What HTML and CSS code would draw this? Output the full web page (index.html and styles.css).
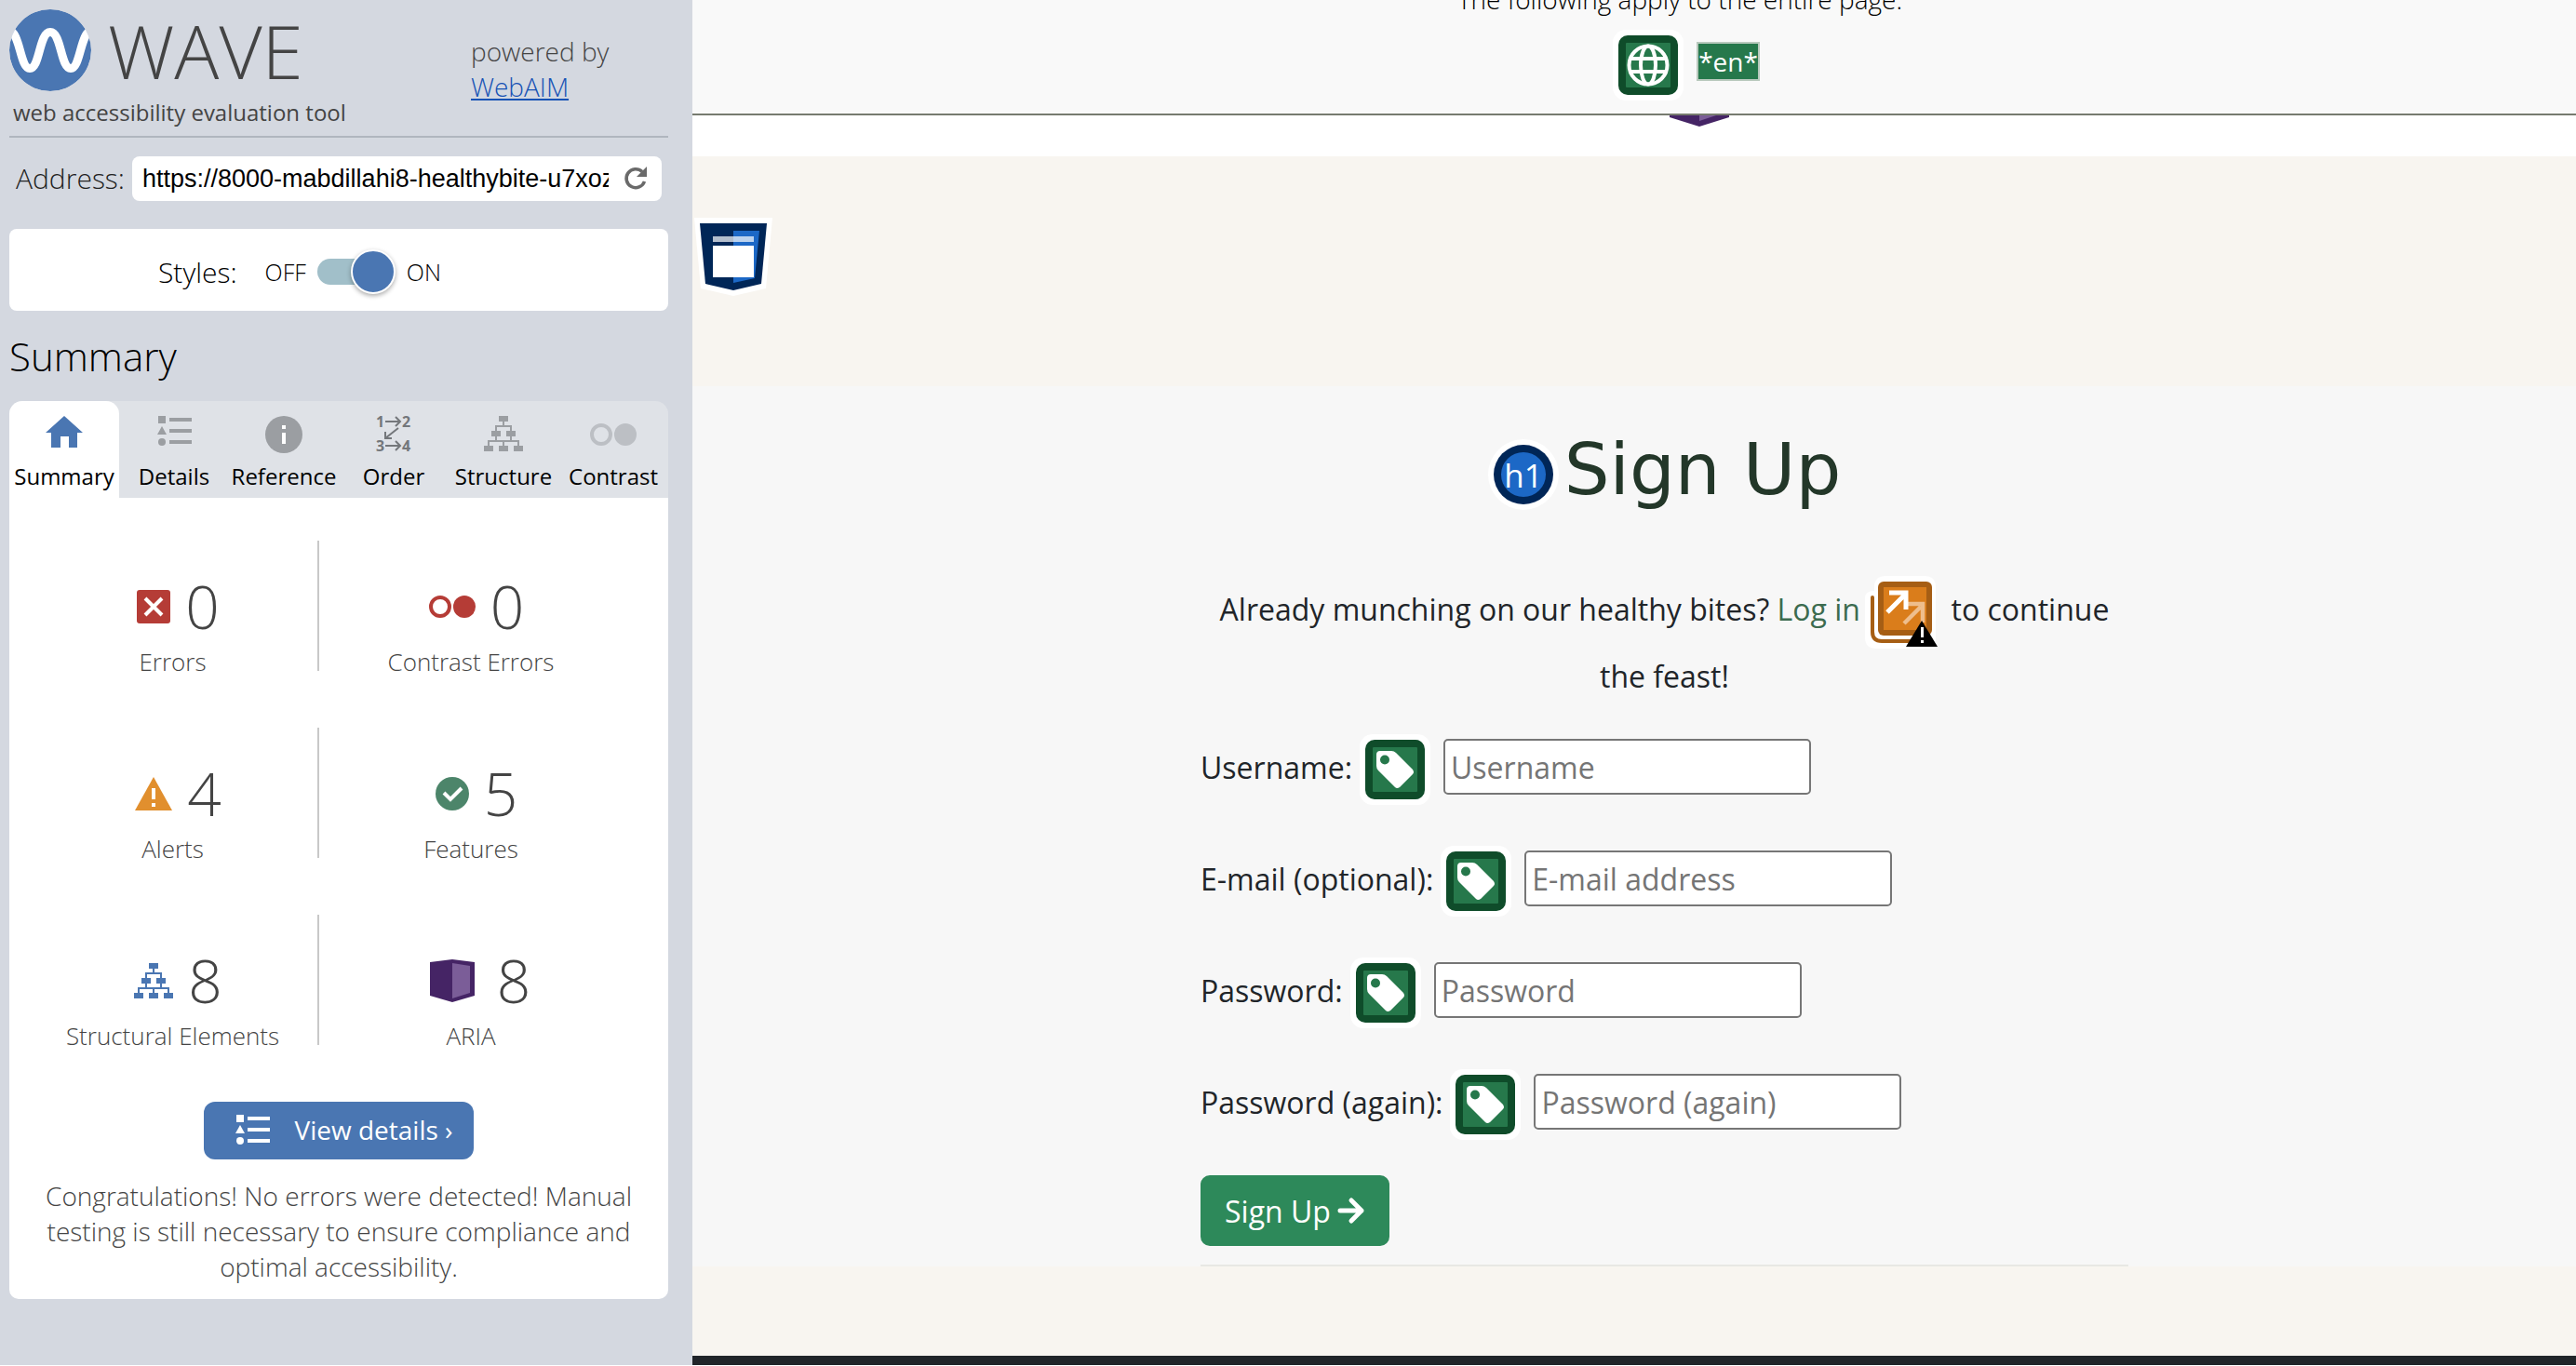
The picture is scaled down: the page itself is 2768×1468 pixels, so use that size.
FILE: index.html
```html
<!DOCTYPE html>
<html lang="en">
<head>
<meta charset="utf-8">
<title>WAVE report: Sign Up</title>
<link rel="stylesheet" href="styles.css">
</head>
<body>
<svg class="sprite" aria-hidden="true">
  <symbol id="list" viewBox="0 0 37 32">
    <path d="M1 0h8v8H1zM5 11l5 9H0zM13 2h24v4H13zM13 14h24v4H13zM13 26h24v4H13z"/><circle cx="5" cy="28" r="4"/>
  </symbol>
  <symbol id="tree" viewBox="0 0 42 38">
    <path d="M16 0h10v6H16zM8 16h10v6H8zM24 16h10v6H24zM0 32h10v6H0zM16 32h10v6H16zM32 32h10v6H32z"/>
    <path d="M21 6v5M13 16v-5h16v5M13 22v5M29 22v5M5 32v-5h32v5M21 27v5" fill="none" stroke="currentColor" stroke-width="2"/>
  </symbol>
  <symbol id="dots" viewBox="0 0 50 24">
    <circle cx="12" cy="12" r="10" fill="none" stroke="currentColor" stroke-width="4"/><circle cx="38" cy="12" r="12"/>
  </symbol>
  <symbol id="tag" viewBox="0 0 76 76">
    <rect width="76" height="76" rx="14" fill="#fff"/><rect x="6" y="6" width="64" height="64" rx="10" fill="#0f4c2a"/><rect x="14" y="14" width="48" height="48" rx="1" fill="#26784b"/>
    <path fill="#fff" fill-rule="evenodd" d="M22 18h12q3 0 5 2l18 18q2 3 0 5L43 57q-3 2-5 0L20 39q-2-2-2-5V22q0-4 4-4zM27 22.500a5 5 0 1 0 0 10a5 5 0 1 0 0-10z"/>
  </symbol>
</svg>

<aside class="sidebar">
  <header class="brand">
    <div>
      <div class="brand-name">
        <svg width="88" height="88" viewBox="0 0 88 88" aria-hidden="true">
          <defs><clipPath id="disc"><circle cx="44" cy="44" r="44"/></clipPath></defs>
          <g clip-path="url(#disc)"><circle cx="44" cy="44" r="44" fill="#4a76b2"/>
          <path d="M-2 22C12 22 11 63.500 22 63.500S32 24.500 44 24.500S55 63.500 66 63.500S76 22 90 22" fill="none" stroke="#fff" stroke-width="9"/></g>
        </svg>
        <span>WAVE</span>
      </div>
      <p class="tagline">web accessibility evaluation tool</p>
    </div>
    <p class="powered">powered by<br><a href="#webaim">WebAIM</a></p>
  </header>

  <form class="address">
    <label for="url">Address:</label>
    <div class="address-box">
      <input id="url" type="text" value="https://8000-mabdillahi8-healthybite-u7xozu2p.ws.gitpod.io/accounts/signup/">
      <button type="button" aria-label="Reload">
        <svg width="26" height="26" viewBox="0 0 26 26"><path d="M20 5.500A10 10 0 1 0 22.500 16" fill="none" stroke="#6a6a6a" stroke-width="3.500"/><path d="M25 0v11H14z" fill="#6a6a6a"/></svg>
      </button>
    </div>
  </form>

  <div class="styles-panel">
    <label for="styles">Styles:</label>
    <span class="state">OFF</span>
    <input id="styles" class="switch" type="checkbox" role="switch" checked>
    <span class="state">ON</span>
  </div>

  <h2>Summary</h2>
  <nav class="tabs">
    <button type="button" class="active"><span class="tab-icon"><svg width="40" height="34" viewBox="0 0 40 34"><path d="M20 0l20 18h-6v16h-9V22h-9v12H6V18H0z"/></svg></span>Summary</button>
    <button type="button"><span class="tab-icon"><svg width="37" height="32"><use href="#list"/></svg></span>Details</button>
    <button type="button"><span class="tab-icon"><svg width="40" height="40" viewBox="0 0 40 40"><circle cx="20" cy="20" r="20"/><path d="M18 10h4v4h-4zM18 18h4v12h-4z" fill="#fff"/></svg></span>Reference</button>
    <button type="button"><span class="tab-icon order"><svg width="38" height="40" viewBox="0 0 38 40"><g font-size="16" font-weight="700"><text x="0" y="12">1</text><text x="28" y="12">2</text><text x="0" y="38">3</text><text x="28" y="38">4</text></g><path d="M10 6h16M21 1l5 5-5 5M10 32h16M21 27l5 5-5 5M24 13L10 24M10 17v7h7" fill="none" stroke="currentColor" stroke-width="2"/></svg></span>Order</button>
    <button type="button"><span class="tab-icon"><svg width="42" height="38"><use href="#tree"/></svg></span>Structure</button>
    <button type="button"><span class="tab-icon faint"><svg width="50" height="24"><use href="#dots"/></svg></span>Contrast</button>
  </nav>

  <section class="report">
    <dl class="counts">
      <div class="count"><dd><svg width="36" height="36" viewBox="0 0 36 36"><rect width="36" height="36" rx="3" fill="#b53c36"/><path d="M9 9l18 18M27 9L9 27" stroke="#fff" stroke-width="4"/></svg>0</dd><dt>Errors</dt></div>
      <div class="count"><dd><svg class="red" width="50" height="24"><use href="#dots"/></svg>0</dd><dt>Contrast Errors</dt></div>
      <div class="count"><dd><svg width="40" height="36" viewBox="0 0 40 36"><path d="M20 0l20 36H0z" fill="#e18f2e"/><path d="M18 12h4v12h-4zM18 28h4v4h-4z" fill="#fff"/></svg>4</dd><dt>Alerts</dt></div>
      <div class="count"><dd><svg width="36" height="36" viewBox="0 0 36 36"><circle cx="18" cy="18" r="18" fill="#4c856a"/><path d="M9 17l7 7 12-12" fill="none" stroke="#fff" stroke-width="4"/></svg>5</dd><dt>Features</dt></div>
      <div class="count"><dd><svg class="blue" width="42" height="38"><use href="#tree"/></svg>8</dd><dt>Structural Elements</dt></div>
      <div class="count"><dd><svg width="64" height="46" viewBox="0 0 64 46"><path d="M32 0l24 3v36l-24 7-24-7V3z" fill="#452465"/><path d="M32 4l19 3v29l-19 6z" fill="#7b5d98"/></svg>8</dd><dt>ARIA</dt></div>
    </dl>
    <button type="button" class="details"><svg width="37" height="32"><use href="#list"/></svg>View details ›</button>
    <p class="verdict">Congratulations! No errors were detected! Manual testing is still necessary to ensure compliance and optimal accessibility.</p>
  </section>
</aside>

<div class="page">
  <div class="page-notes">
    <p>The following apply to the entire page.</p>
    <div class="notes-row">
      <svg width="76" height="76" viewBox="0 0 76 76"><rect width="76" height="76" rx="14" fill="#fff"/><rect x="6" y="6" width="64" height="64" rx="10" fill="#0f4c2a"/><rect x="14" y="14" width="48" height="48" rx="1" fill="#26784b"/><g fill="none" stroke="#fff" stroke-width="4"><circle cx="38" cy="38" r="20.500"/><ellipse cx="38" cy="38" rx="8" ry="20.500"/><path d="M19 31h38M19 45h38"/></g></svg>
      <span class="lang">*en*</span>
    </div>
  </div>
  <div class="navbar">
    <svg width="76" height="18" viewBox="0 0 76 18"><path d="M6 0h64v2L38 12 6 2z" fill="#452465"/><path d="M38 0h18L38 6z" fill="#7b5d98"/></svg>
  </div>

  <main>
    <svg class="landmark" width="84" height="84" viewBox="0 0 84 84"><path d="M0 0h84l-7 76-35 8-35-8z" fill="#fff"/><path d="M6 6h72l-6 65-30 7-30-7z" fill="#002657"/><path d="M42 14h28l-5 51-23 5z" fill="#1c68c6"/><path d="M20 20h44v6H20z" fill="#fff" opacity=".7"/><path d="M20 30h44v34H20z" fill="#fff"/></svg>
    <section class="signup">
      <div class="column">
        <h1><svg width="76" height="76" viewBox="0 0 76 76"><circle cx="38" cy="38" r="38" fill="#fff"/><circle cx="38" cy="38" r="32" fill="#002657"/><circle cx="38" cy="38" r="24" fill="#1c68c6"/><text x="38" y="52" font-size="35" text-anchor="middle" fill="#fff">h1</text></svg>Sign Up</h1>
        <p class="intro">Already munching on our healthy bites? <a href="#login">Log in</a> <svg width="78" height="78" viewBox="0 0 78 78"><path d="M10 16V12Q10 0 22 0h42q12 0 12 12v66H12Q0 78 0 66V24q0-8 10-8z" fill="#fff"/><path d="M8 23v37q0 10 10 10h40" fill="none" stroke="#a65e14" stroke-width="4" stroke-linecap="round"/><rect x="14" y="6" width="58" height="58" rx="6" fill="#a65e14"/><rect x="20" y="12" width="46" height="46" fill="#da7d1b"/><path d="M42 51l18-18M44 30h18v20" fill="none" stroke="#eebe8d" stroke-width="4.500"/><path d="M24 39l19-19M26 18h18v18" fill="none" stroke="#fff" stroke-width="5"/><path d="M61 48l17 28H44z" fill="#000"/><path d="M60 55h3v11h-3zM60 69h3v3h-3z" fill="#fff"/></svg> to continue the feast!</p>
        <form>
          <div class="field"><label for="username">Username:</label><svg class="badge" width="76" height="76"><use href="#tag"/></svg><input id="username" type="text" placeholder="Username"></div>
          <div class="field"><label for="email">E-mail (optional):</label><svg class="badge" width="76" height="76"><use href="#tag"/></svg><input id="email" type="email" placeholder="E-mail address"></div>
          <div class="field"><label for="pass1">Password:</label><svg class="badge" width="76" height="76"><use href="#tag"/></svg><input id="pass1" type="password" placeholder="Password"></div>
          <div class="field"><label for="pass2">Password (again):</label><svg class="badge" width="76" height="76"><use href="#tag"/></svg><input id="pass2" type="password" placeholder="Password (again)"></div>
          <button type="submit" class="submit">Sign Up<svg width="30" height="28" viewBox="0 0 30 28"><path d="M3 14h23M15 3l11 11-11 11" fill="none" stroke="#fff" stroke-width="5" stroke-linecap="round" stroke-linejoin="round"/></svg></button>
        </form>
        <hr>
      </div>
    </section>
  </main>
  <footer></footer>
</div>
</body>
</html>
```
FILE: styles.css
```css
* { box-sizing: border-box; margin: 0; padding: 0; }

body {
  display: grid;
  grid-template-columns: 744px 1fr;
  min-height: 100vh;
  padding-bottom: 1px;
  background: #fff;
  color: #000;
  font-family: "Open Sans", "Noto Sans", sans-serif;
}

button { border: 0; background: none; font: inherit; }
svg { flex: none; fill: currentColor; overflow: visible; }
.sprite { display: none; }

/* Sidebar */
.sidebar {
  padding: 10px 26px 0 10px;
  background: #d4d8e0;
  font-size: 28px;
  font-weight: 300;
}

.brand {
  display: grid;
  grid-template-columns: 496px 1fr;
  height: 138px;
  border-bottom: 2px solid #b0b6bf;
  color: #444;
}
.brand-name {
  display: flex;
  gap: 18px;
  font-size: 80px;
  line-height: 88px;
}
.tagline {
  padding: 7px 0 0 4px;
  font-size: 24px;
  font-weight: 400;
  line-height: 32px;
}
.powered { padding-top: 26px; line-height: 38px; }
.powered a { color: #1652b5; }

.address {
  display: flex;
  align-items: center;
  gap: 8px;
  margin-top: 20px;
  padding: 0 7px 0 7px;
  font-size: 30px;
  line-height: 46px;
  color: #222;
}
.address-box {
  display: flex;
  align-items: center;
  flex: 1;
  height: 48px;
  padding: 0 15px 0 11px;
  border-radius: 8px;
  background: #fff;
}
.address-box input {
  flex: 1;
  min-width: 0;
  height: 40px;
  margin-right: 16px;
  border: 0;
  background: none;
  font: 27px "Liberation Sans", Arial, sans-serif;
}
.address-box button { display: flex; }

.styles-panel {
  display: flex;
  align-items: center;
  height: 88px;
  margin-top: 30px;
  padding: 4px 0 0 160px;
  border-radius: 8px;
  background: #fff;
}
.styles-panel label { margin-right: 30px; font-size: 30px; }
.state { font-size: 25px; }
.switch {
  display: flex;
  align-items: center;
  justify-content: flex-end;
  width: 80px;
  height: 28px;
  margin: 0 16px 0 12px;
  border-radius: 14px;
  background: #a1bfc9;
  appearance: none;
}
.switch::before {
  content: "";
  flex: none;
  width: 44px;
  height: 44px;
  margin-right: -4px;
  border: 2px solid #fff;
  border-radius: 50%;
  background: #4a76b2;
  box-shadow: 0 2px 5px #0005;
}

h2 {
  margin: 21px 0 20px;
  font-size: 42px;
  font-weight: 300;
  line-height: 56px;
}

.tabs {
  display: grid;
  grid-template-columns: repeat(6, 1fr);
  border-radius: 14px 14px 0 0;
  background: #dfe2e7;
}
.tabs button {
  display: flex;
  flex-direction: column;
  align-items: center;
  gap: 9px;
  height: 104px;
  padding-top: 16px;
  border-radius: 14px 14px 0 0;
  color: #000;
  font-size: 24px;
  font-weight: 400;
  line-height: 32px;
}
.tabs .active { background: #fff; }
.tab-icon { display: flex; height: 40px; color: #9b9ea2; }
.active .tab-icon { color: #4a76b2; }
.tab-icon.order { color: #74777b; }
.tab-icon.faint { align-items: center; color: #bcbfc4; }

.report {
  padding: 46px 0 16px;
  border-radius: 0 0 10px 10px;
  background: #fff;
  color: #444;
  text-align: center;
}
.counts {
  display: grid;
  grid-template-columns: 313fr 326fr;
  row-gap: 61px;
  padding: 0 49px 0 20px;
}
.count { padding-top: 39px; }
.count:nth-child(odd) { border-right: 2px solid #c8c8c8; }
.count dd {
  display: flex;
  align-items: center;
  justify-content: center;
  gap: 16px;
  padding-left: 12px;
  font-size: 64px;
  line-height: 64px;
}
.count dt { padding-top: 17px; font-size: 26px; line-height: 20px; }
.red { color: #b53c36; }
.blue { color: #4a76b2; }

.details {
  display: flex;
  align-items: center;
  justify-content: center;
  gap: 26px;
  width: 290px;
  height: 62px;
  margin: 61px auto 20px;
  padding: 0 0 2px 12px;
  border-radius: 12px;
  background: #4a76b2;
  color: #fff;
  font-weight: 400;
}
.verdict { padding: 0 36px; line-height: 38px; }

/* Evaluated page */
.page { display: flex; flex-direction: column; color: #212529; }

.page-notes {
  display: flex;
  flex-direction: column;
  align-items: center;
  justify-content: flex-end;
  height: 124px;
  padding: 0 0 14px 98px;
  overflow: hidden;
  border-bottom: 2px solid #777b6f;
  background: #f9f9f9;
  color: #000;
  font-size: 28px;
  font-weight: 300;
  line-height: 38px;
}
.page-notes p { margin-bottom: 14px; }
.notes-row { display: flex; align-items: center; gap: 14px; padding-left: 14px; }
.lang {
  height: 42px;
  margin-bottom: 8px;
  border: 2px solid #b9c9bd;
  background: #26784b;
  color: #fff;
  font-weight: 400;
}
.navbar { display: flex; justify-content: center; height: 44px; padding-left: 140px; background: #fff; }

main {
  position: relative;
  flex: 1;
  padding: 247px 0 96px;
  background: #f8f5f0;
}
.landmark { position: absolute; top: 66px; left: 2px; }

.signup { padding: 44px 0 0 65px; background: #f7f7f7; }
.column { max-width: 997px; margin: 0 auto; font-size: 32px; }

h1 {
  color: #233729;
  font: 77px/92px "DejaVu Sans", Verdana, sans-serif;
  text-align: center;
}
h1 svg { margin: -8px 6px -8px 0; vertical-align: middle; font-family: "Open Sans", sans-serif; }

.intro { margin-top: 68px; line-height: 72px; text-align: center; }
.intro a { color: #3c6b4f; text-decoration: none; }
.intro svg { margin: -8px 6px -8px -3px; vertical-align: middle; }

.intro + form { margin-top: 31px; }
.field { display: flex; align-items: center; height: 60px; margin-bottom: 60px; }
.badge { margin: -5px 14px -11px 8px; }
.field input {
  width: 395px;
  height: 60px;
  padding: 0 6px;
  border: 2px solid #767676;
  border-radius: 5px;
  background: #fff;
  font: inherit;
}
.field input::placeholder { color: #757575; }

.submit {
  display: flex;
  align-items: center;
  gap: 7px;
  height: 76px;
  margin-top: -11px;
  padding: 0 26px;
  border-radius: 10px;
  background: #2d895a;
  color: #fff;
}
hr { margin-top: 20px; border: 0; border-top: 2px solid #e8e8e4; }

footer { height: 10px; background: #212529; }
```
